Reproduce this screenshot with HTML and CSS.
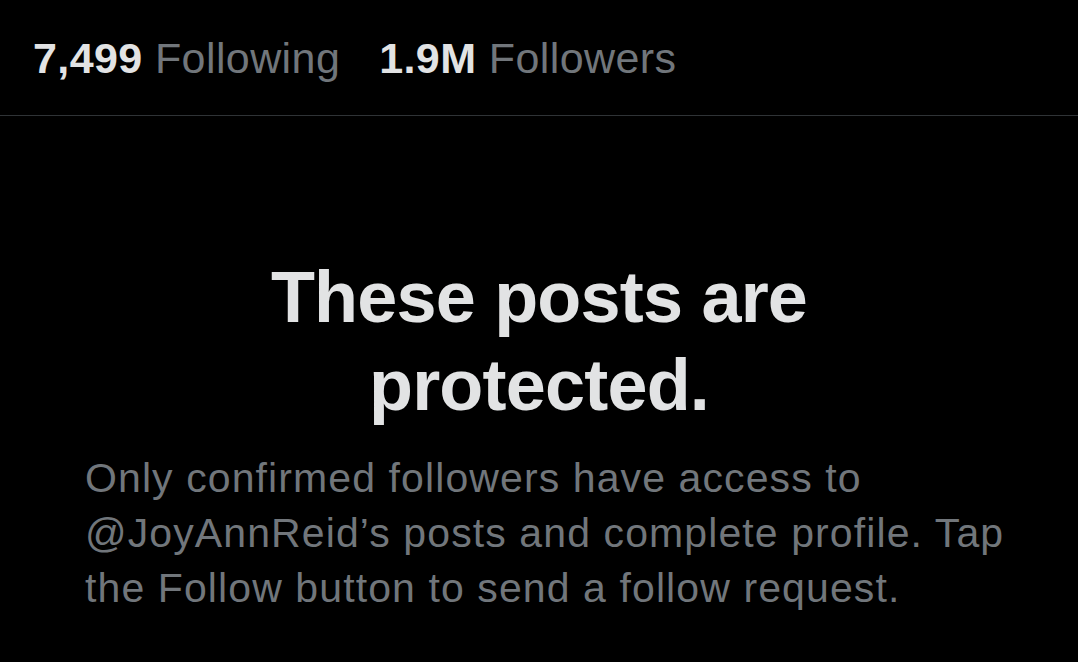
FILE: index.html
```html
<!DOCTYPE html>
<html lang="en">
<head>
    <meta charset="UTF-8">
    <meta name="viewport" content="width=device-width, initial-scale=1.0">
    <title>Protected posts</title>
    <link rel="stylesheet" href="styles.css">
</head>
<body>

<div class="stats">
    <span class="stat"><strong>7,499</strong> Following</span>
    <span class="stat"><strong>1.9M</strong> Followers</span>
</div>

<div class="protected">
    <h1>These posts are protected.</h1>
    <p>Only confirmed followers have access to @JoyAnnReid’s posts and complete profile. Tap the Follow button to send a follow request.</p>
</div>

</body>
</html>
```

FILE: styles.css
```css
body {
    font-family: "Liberation Sans", Arial, sans-serif;
    background-color: #000;
    color: #71767b;
    margin: 0;
}
.stats {
    display: flex;
    gap: 39px;
    padding: 30px 0 0 33px;
    height: 116px;
    box-sizing: border-box;
    border-bottom: 1px solid #2f3336;
    font-size: 43px;
    line-height: 56px;
    letter-spacing: 0.4px;
}
.stat strong {
    color: #e2e3e4;
    font-weight: bold;
}
.protected {
    padding: 137px 50px 0 85px;
}
h1 {
    margin: 0;
    text-align: center;
    color: #e2e3e4;
    font-size: 72px;
    line-height: 88px;
    letter-spacing: -0.8px;
    padding: 0 128px 0 93px;
}
p {
    margin: 22px 0 0 0;
    font-size: 41px;
    line-height: 55px;
    letter-spacing: 1.1px;
}
```
